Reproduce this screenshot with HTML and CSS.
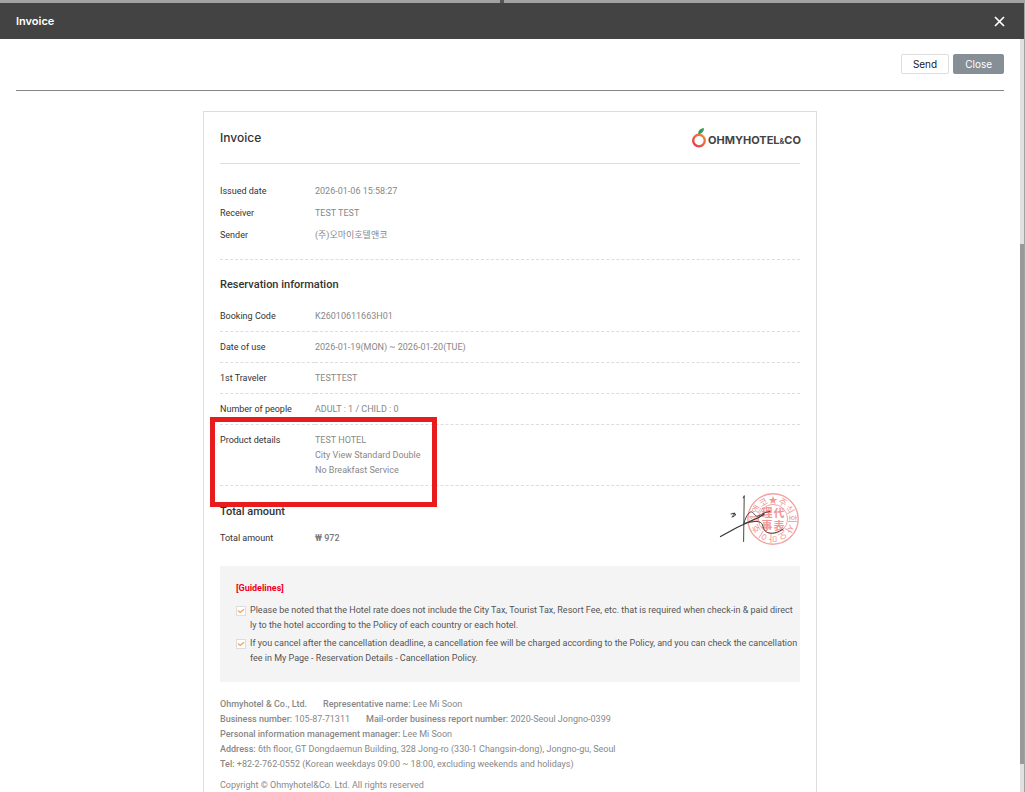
FILE: index.html
```html
<!DOCTYPE html>
<html lang="en">
<head>
<meta charset="utf-8">
<title>Invoice</title>
<link rel="stylesheet" href="styles.css">
</head>
<body>
<section class="modal">
  <header class="modal-head">
    <h1 class="modal-title">Invoice</h1>
    <button class="modal-x" type="button" aria-label="Close window">
      <svg width="11" height="11" viewBox="0 0 11 11"><path d="M1 1l9 9M10 1l-9 9" stroke="#fff" stroke-width="1.7" fill="none"/></svg>
    </button>
  </header>
  <div class="modal-body">
    <div class="content">
      <div class="toolbar">
        <button class="btn" type="button">Send</button>
        <button class="btn btn-dark" type="button">Close</button>
      </div>
      <article class="card">
        <div class="card-head">
          <h2 class="card-title">Invoice</h2>
          <svg class="logo" width="110" height="22" viewBox="0 0 110 22" role="img" aria-label="Ohmyhotel and Co">
            <defs><linearGradient id="peel" x1="0" y1="1" x2="1" y2="0"><stop offset="0" stop-color="#e2384a"/><stop offset="1" stop-color="#f58a3c"/></linearGradient></defs>
            <circle cx="9" cy="13.6" r="5.8" fill="none" stroke="url(#peel)" stroke-width="2.4"/>
            <path d="M8.2 7C8 3.6 10.2 1.2 14 1.2 13.8 4.6 12 6.8 8.2 7Z" fill="#2f9d58"/>
            <text class="logo-text" x="18" y="17">OHMYHOTEL<tspan class="logo-amp">&amp;</tspan>CO</text>
          </svg>
        </div>
        <table class="facts facts-plain">
          <tr><th scope="row">Issued date</th><td>2026-01-06 15:58:27</td></tr>
          <tr><th scope="row">Receiver</th><td>TEST TEST</td></tr>
          <tr><th scope="row">Sender</th><td>(주)오마이호텔앤코</td></tr>
        </table>
        <h3 class="section-title">Reservation information</h3>
        <div class="reservation">
          <table class="facts facts-lined">
            <tr><th scope="row">Booking Code</th><td>K26010611663H01</td></tr>
            <tr><th scope="row">Date of use</th><td>2026-01-19(MON) ~ 2026-01-20(TUE)</td></tr>
            <tr><th scope="row">1st Traveler</th><td>TESTTEST</td></tr>
            <tr><th scope="row">Number of people</th><td>ADULT : 1 / CHILD : 0</td></tr>
            <tr><th scope="row">Product details</th><td>TEST HOTEL<br>City View Standard Double<br>No Breakfast Service</td></tr>
          </table>
          <div class="highlight"></div>
        </div>
        <div class="total">
          <div>
            <h3 class="section-title total-title">Total amount</h3>
            <table class="facts">
              <tr><th scope="row">Total amount</th><td class="amount">₩ 972</td></tr>
            </table>
          </div>
          <svg class="seal" width="81" height="56" viewBox="0 0 81 56" role="img" aria-label="Signature and company seal">
            <g fill="none" stroke="#f4a3a3">
              <circle cx="54" cy="28" r="25.2" stroke-width="1.4"/>
              <circle cx="54" cy="28" r="14.6" stroke-width="1"/>
            </g>
            <g class="seal-core"><text x="48" y="26">理</text><text x="60" y="26">代</text><text x="48" y="39">事</text><text x="60" y="39">表</text></g>
            <g class="seal-ring">
              <text x="54" y="12">★</text>
              <text x="54" y="12" transform="rotate(30 54 28)">주</text>
              <text x="54" y="12" transform="rotate(60 54 28)">식</text>
              <text x="54" y="12" transform="rotate(90 54 28)">회</text>
              <text x="54" y="12" transform="rotate(120 54 28)">사</text>
              <text x="54" y="12" transform="rotate(150 54 28)">오</text>
              <text x="54" y="12" transform="rotate(180 54 28)">마</text>
              <text x="54" y="12" transform="rotate(210 54 28)">이</text>
              <text x="54" y="12" transform="rotate(240 54 28)">호</text>
              <text x="54" y="12" transform="rotate(270 54 28)">텔</text>
              <text x="54" y="12" transform="rotate(300 54 28)">앤</text>
              <text x="54" y="12" transform="rotate(330 54 28)">코</text>
            </g>
            <g fill="none" stroke="#333" stroke-linecap="round" stroke-linejoin="round" stroke-width=".9">
              <path d="M25.2 5L24.600 50.500M25.200 5l-1 2"/>
              <path d="M1.500 45.500L18 36.500 34 29Q40 27 45 23" stroke-width="1.2"/>
              <path d="M25 32C27 24 31 20 33 21S36 26 39 25 45 21 51 20.500"/>
              <path d="M25 32.500C34 30 42 29 43.500 34S46 41 50 42 60 41 64 38"/>
              <path d="M12 23l4-1-3 4M14 22.500l3 1-3 2.500"/>
            </g>
          </svg>
        </div>
        <section class="guide">
          <h4 class="guide-title">[Guidelines]</h4>
          <ul class="guide-list">
            <li><svg class="tick" width="10" height="10" viewBox="0 0 10 10"><rect x=".5" y=".5" width="9" height="9" fill="#fff" stroke="#ddd"/><path d="M2 4.500l2.200 2L8 3.200" fill="none" stroke="#f4a15d" stroke-width="1.3"/></svg>
              <p>Please be noted that the Hotel rate does not include the City Tax, Tourist Tax, Resort Fee, etc. that is required when check-in &amp; paid direct<br>ly to the hotel according to the Policy of each country or each hotel.</p></li>
            <li><svg class="tick" width="10" height="10" viewBox="0 0 10 10"><rect x=".5" y=".5" width="9" height="9" fill="#fff" stroke="#ddd"/><path d="M2 4.500l2.200 2L8 3.200" fill="none" stroke="#f4a15d" stroke-width="1.3"/></svg>
              <p>If you cancel after the cancellation deadline, a cancellation fee will be charged according to the Policy, and you can check the cancellation<br>fee in My Page - Reservation Details - Cancellation Policy.</p></li>
          </ul>
        </section>
        <footer class="company">
          <p><b class="gap">Ohmyhotel &amp; Co., Ltd.</b><b>Representative name:</b> Lee Mi Soon</p>
          <p><b>Business number:</b> <span class="gap">105-87-71311</span><b>Mail-order business report number:</b> 2020-Seoul Jongno-0399</p>
          <p><b>Personal information management manager:</b> Lee Mi Soon</p>
          <p><b>Address:</b> 6th floor, GT Dongdaemun Building, 328 Jong-ro (330-1 Changsin-dong), Jongno-gu, Seoul</p>
          <p><b>Tel:</b> +82-2-762-0552 (Korean weekdays 09:00 ~ 18:00, excluding weekends and holidays)</p>
          <p class="copyright">Copyright © Ohmyhotel&amp;Co. Ltd. All rights reserved</p>
        </footer>
      </article>
    </div>
    <div class="scroll-track"><div class="scroll-thumb"></div></div>
  </div>
</section>
</body>
</html>
```
FILE: styles.css
```css
* { box-sizing: border-box; margin: 0; padding: 0; }
body {
  height: 100vh;
  overflow: hidden;
  padding: 3px 1px 0 0;
  background: linear-gradient(#555, #555) 500px 0 / 4px 3px no-repeat #a2a2a2;
  font: 10px/15px Inter, "Noto Sans CJK KR", sans-serif;
  color: #333;
}
button { font: inherit; cursor: pointer; }
.modal { display: flex; flex-direction: column; height: 100%; background: #fff; }
.modal-head {
  display: flex; flex: none; align-items: center; justify-content: space-between;
  height: 36px; padding: 0 19px 0 16px; background: #434343; color: #fff;
}
.modal-title { font-size: 11px; font-weight: 600; }
.modal-x { display: flex; border: 0; background: none; }
.modal-body { display: flex; flex: 1; min-height: 0; overflow: hidden; }
.content { flex: 1; padding: 0 16px; }
.scroll-track { display: flex; flex-direction: column; width: 4px; padding: 205px 0 28px; background: #e0e0e0; }
.scroll-thumb { flex: 1; background: #999; }
.toolbar {
  display: flex; justify-content: flex-end; gap: 4px;
  padding: 15px 0 16px; border-bottom: 1px solid #868686;
}
.btn { height: 20px; padding: 0 11px; border: 1px solid #ddd; border-radius: 2px; background: #fff; color: #222; line-height: 18px; }
.btn-dark { border-color: #868e96; background: #868e96; color: #fff; }

.card {
  max-width: 614px; margin: 20px auto 0; padding: 0 16px 30px; border: 1px solid #ddd;
  font-family: Roboto, "Noto Sans CJK KR", sans-serif; font-size: 9px;
}
.card-head {
  display: flex; align-items: center; justify-content: space-between;
  height: 52px; border-bottom: 1px solid #ddd;
}
.card-title { font: 500 12px/15px Inter, sans-serif; }
.logo { overflow: visible; }
.logo-text { font: 700 11px Inter, sans-serif; fill: #444; }
.logo-amp { font-size: 7px; }

.facts { width: 100%; border-spacing: 0; text-align: left; }
.facts th { width: 95px; font-weight: 400; vertical-align: top; white-space: nowrap; }
.facts td { color: #888; }
.facts-plain { padding: 16px 0 13px; border-bottom: 1px dashed #ddd; }
.facts-plain th, .facts-plain td { padding: 4px 0; line-height: 14px; }
.section-title { font-size: 11px; font-weight: 500; line-height: 16px; }
.facts-plain + .section-title { margin: 17px 0 8px; }
.reservation { position: relative; }
.facts-lined th, .facts-lined td { padding: 8px 0 7px; border-bottom: 1px dashed #ddd; }
.highlight {
  position: absolute; left: -10px; bottom: -21px;
  width: 227px; height: 90px; border: 5px solid #e81c1c;
}
.total { display: flex; justify-content: space-between; height: 80px; padding-top: 18px; }
.total-title { margin-bottom: 11px; }
.facts .amount { color: #777; font-weight: 500; }
.seal { margin-top: -13px; }
.seal-core { font: 700 11px "Noto Sans CJK KR", sans-serif; fill: #f29595; text-anchor: middle; }
.seal-ring { font: 400 9px "Noto Sans CJK KR", sans-serif; fill: #f29595; text-anchor: middle; }

.guide { padding: 15px 16px 16px; background: #f4f4f4; }
.guide-title { color: #f0001e; font-size: 9px; font-weight: 700; }
.guide-list { display: grid; gap: 3px; margin-top: 7px; list-style: none; color: #555; }
.guide-list li { display: flex; gap: 4px; white-space: nowrap; }
.tick { flex: none; margin-top: 3px; }
.company { margin-top: 15px; color: #888; }
.company b { font-weight: 500; }
.gap { margin-right: 16px; }
.copyright { margin-top: 6px; }
```
